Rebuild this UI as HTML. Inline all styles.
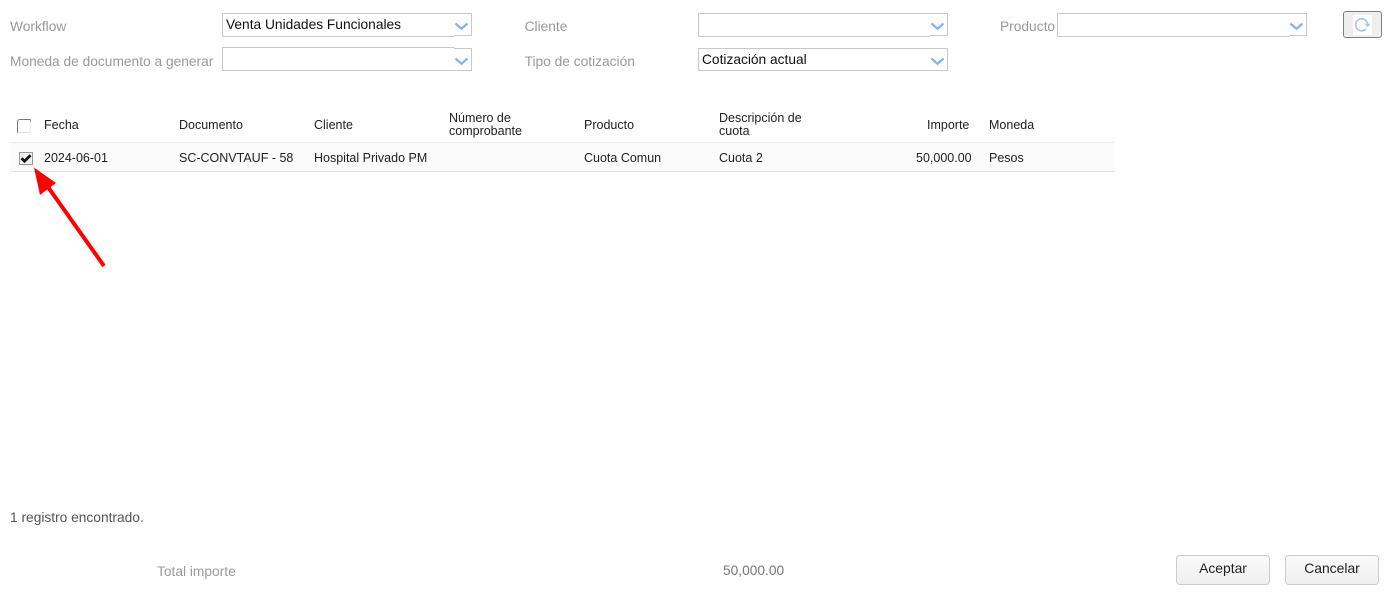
<!DOCTYPE html>
<html><head><meta charset="utf-8"><style>
html,body{margin:0;padding:0;background:#fff;width:1400px;height:597px;overflow:hidden;font-family:"Liberation Sans",sans-serif}
.t{position:absolute;white-space:nowrap}
.l{font-size:13.75px;color:#999;line-height:16px}
.c{font-size:12.5px;color:#222;line-height:13px}
.s{position:absolute;box-sizing:border-box;height:23px;border:1px solid #c8c8c8;background:#fff;font-size:13.75px;color:#111;padding-left:3px;line-height:22px}
.s svg{position:absolute;right:2px;top:8px}
.g{position:absolute;height:1px}
.gl{background:#c8c8c8}
.w{background:#fff}
.b{position:absolute;box-sizing:border-box;width:94px;height:30px;border:1px solid #ccc;border-radius:4px;background:linear-gradient(#fafafa,#efefef);font-size:13.9px;color:#222;text-align:center;line-height:25px}
</style></head><body>
<div class="t l" style="left:10px;top:19px">Workflow</div>
<div class="t l" style="left:10px;top:54px">Moneda de documento a generar</div>
<div class="t l" style="left:524.6px;top:19px">Cliente</div>
<div class="t l" style="left:524.6px;top:54px">Tipo de cotización</div>
<div class="t l" style="left:1000px;top:19px">Producto</div>

<div class="s" style="left:222px;top:13px;width:250px">Venta Unidades Funcionales<svg width="15" height="9" viewBox="0 0 15 9"><path d="M1.5 1.5L7.5 6.8L13.5 1.5" fill="none" stroke="#82b1f5" stroke-width="2.2"/></svg></div>
<div class="g w" style="left:223px;top:35px;width:231px"></div>
<div class="g gl" style="left:222px;top:36px;width:232px"></div>
<div style="position:absolute;left:222px;top:35px;width:1px;height:1px;background:#c8c8c8"></div>

<div class="s" style="left:222px;top:48px;width:250px"><svg width="15" height="9" viewBox="0 0 15 9"><path d="M1.5 1.5L7.5 6.8L13.5 1.5" fill="none" stroke="#82b1f5" stroke-width="2.2"/></svg></div>
<div class="g w" style="left:223px;top:48px;width:231px"></div>
<div class="g gl" style="left:222px;top:47px;width:232px"></div>

<div class="s" style="left:698px;top:13px;width:250px"><svg width="15" height="9" viewBox="0 0 15 9"><path d="M1.5 1.5L7.5 6.8L13.5 1.5" fill="none" stroke="#82b1f5" stroke-width="2.2"/></svg></div>
<div class="g w" style="left:699px;top:35px;width:231px"></div>
<div class="g gl" style="left:698px;top:36px;width:232px"></div>
<div style="position:absolute;left:698px;top:35px;width:1px;height:1px;background:#c8c8c8"></div>

<div class="s" style="left:698px;top:48px;width:250px">Cotización actual<svg width="15" height="9" viewBox="0 0 15 9"><path d="M1.5 1.5L7.5 6.8L13.5 1.5" fill="none" stroke="#82b1f5" stroke-width="2.2"/></svg></div>

<div class="s" style="left:1057px;top:13px;width:250px"><svg width="15" height="9" viewBox="0 0 15 9"><path d="M1.5 1.5L7.5 6.8L13.5 1.5" fill="none" stroke="#82b1f5" stroke-width="2.2"/></svg></div>
<div class="g w" style="left:1058px;top:35px;width:231px"></div>
<div class="g gl" style="left:1057px;top:36px;width:232px"></div>
<div style="position:absolute;left:1057px;top:35px;width:1px;height:1px;background:#c8c8c8"></div>

<div style="position:absolute;left:1343px;top:11px;width:39px;height:27px;box-sizing:border-box;border:1px solid #808080;border-radius:3px;background:#eee">
<div style="position:absolute;left:9px;top:3px;width:19px;height:20px;background:#fff"></div>
</div>
<svg style="position:absolute;left:1352px;top:15px" width="20" height="20" viewBox="0 0 20 20"><path d="M14 14A6 6 0 1 1 15.6 8.8" fill="none" stroke="#a3c6f5" stroke-width="1.7"/><path d="M12.6 8.8H18.6L15.7 12.2z" fill="#a3c6f5"/></svg>

<div style="position:absolute;left:10px;top:142px;width:1105px;height:30px;box-sizing:border-box;background:#fbfbfb;border-top:1px solid #eaeaea;border-bottom:1px solid #e4e4e4"></div>

<div style="position:absolute;left:17px;top:119px;width:14px;height:14px;box-sizing:border-box;border:1px solid;border-color:#777 #f0f0f0 #e2e2e2 #777;border-top-left-radius:3px"></div>
<div style="position:absolute;left:30px;top:119px;width:1px;height:3px;background:#999"></div>

<div class="t c" style="left:44px;top:119px">Fecha</div>
<div class="t c" style="left:179px;top:119px">Documento</div>
<div class="t c" style="left:314px;top:119px">Cliente</div>
<div class="t c" style="left:449px;top:112px">Número de<br>comprobante</div>
<div class="t c" style="left:584px;top:119px">Producto</div>
<div class="t c" style="left:719px;top:112px">Descripción de<br>cuota</div>
<div class="t c" style="left:927px;top:119px">Importe</div>
<div class="t c" style="left:989px;top:119px">Moneda</div>

<div style="position:absolute;left:19px;top:152px;width:14px;height:13px;box-sizing:border-box;border:1px solid #999;background:#f0f0f0"></div>
<svg style="position:absolute;left:19px;top:152px" width="14" height="13" viewBox="0 0 14 13"><path d="M2.5 6.2L5.5 9.2L11.5 3.2" fill="none" stroke="#111" stroke-width="2.8"/></svg>

<div class="t c" style="left:44px;top:152px">2024-06-01</div>
<div class="t c" style="left:179px;top:152px">SC-CONVTAUF - 58</div>
<div class="t c" style="left:314px;top:152px">Hospital Privado PM</div>
<div class="t c" style="left:584px;top:152px">Cuota Comun</div>
<div class="t c" style="left:719px;top:152px">Cuota 2</div>
<div class="t c" style="left:916px;top:152px">50,000.00</div>
<div class="t c" style="left:989px;top:152px">Pesos</div>

<svg style="position:absolute;left:30px;top:165px" width="80" height="105" viewBox="0 0 80 105"><path d="M74 101L18 22" stroke="#f00" stroke-width="4" fill="none"/><path d="M4 2.5L26 18L10 30z" fill="#f00"/></svg>

<div class="t" style="left:10px;top:510px;font-size:13.75px;line-height:16px;color:#555">1 registro encontrado.</div>
<div class="t l" style="left:157px;top:564px">Total importe</div>
<div class="t" style="left:723px;top:563px;font-size:13.75px;line-height:16px;color:#777">50,000.00</div>
<div class="b" style="left:1176px;top:555px">Aceptar</div>
<div class="b" style="left:1285px;top:555px">Cancelar</div>
</body></html>
